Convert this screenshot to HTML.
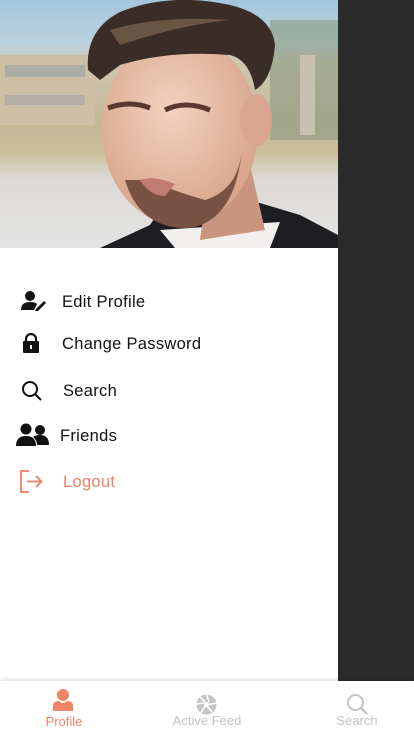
<!DOCTYPE html>
<html><head><meta charset="utf-8"><style>
*{margin:0;padding:0;box-sizing:border-box}
body{width:414px;height:736px;overflow:hidden;background:#fff;font-family:"Liberation Sans",sans-serif;position:relative}
.dark{position:absolute;left:338px;top:0;width:76px;height:681px;background:#2b2b2b}
.photo{position:absolute;left:0;top:0;width:338px;height:248px;overflow:hidden}
.item{position:absolute;left:0;font-size:16.5px;color:#111;letter-spacing:.3px}
.item svg{position:absolute}
.item span{top:2px!important}
.nav{position:absolute;left:0;top:681px;width:414px;height:55px;background:#fff;box-shadow:0 -2px 4px rgba(0,0,0,.12)}
.nav div{position:absolute;font-size:13px;text-align:center}
</style></head><body>
<div class="photo">
<svg width="338" height="248" viewBox="0 0 338 248">
<defs>
<linearGradient id="bg" x1="0" y1="0" x2="0" y2="1">
<stop offset="0" stop-color="#a4c6dc"/><stop offset=".18" stop-color="#bcd2de"/>
<stop offset=".25" stop-color="#cfc6b0"/><stop offset=".5" stop-color="#c4b89a"/>
<stop offset=".62" stop-color="#cbbf9e"/><stop offset=".72" stop-color="#dcdad6"/>
<stop offset="1" stop-color="#e4e4e4"/></linearGradient>
<radialGradient id="sk" cx=".45" cy=".4" r=".6"><stop offset="0" stop-color="#f2d2c0"/><stop offset="1" stop-color="#d8a48c"/></radialGradient>
</defs>
<rect width="338" height="248" fill="url(#bg)"/>
<rect x="0" y="55" width="95" height="70" fill="#cdbfa6"/>
<rect x="5" y="65" width="80" height="12" fill="#8e9ca4" opacity=".5"/>
<rect x="5" y="95" width="80" height="10" fill="#8e9ca4" opacity=".4"/>
<rect x="270" y="20" width="68" height="120" fill="#8a9a80" opacity=".6"/>
<rect x="300" y="55" width="15" height="80" fill="#c8c0b0"/>
<path d="M100 248 L150 225 L160 210 L250 200 L300 215 L338 235 L338 248Z" fill="#1e1e22"/>
<path d="M160 230 L175 248 L270 248 L280 222Z" fill="#f2f0ee"/>
<path d="M210 170 L250 165 L265 230 L200 240Z" fill="#c9957e"/>
<ellipse cx="180" cy="130" rx="78" ry="95" fill="url(#sk)"/>
<ellipse cx="256" cy="120" rx="16" ry="26" fill="#d9a590"/>
<path d="M125 180 Q140 230 190 228 Q235 220 242 150 Q238 190 205 200 Q170 190 150 180Z" fill="#7a5244"/>
<path d="M140 180 Q155 175 175 184 L165 196 Q150 196 140 180Z" fill="#c07c72"/>
<path d="M88 70 Q85 30 120 12 Q170 -8 230 5 Q272 15 275 45 Q272 80 255 90 Q250 60 230 55 Q170 50 120 65 L100 80Z" fill="#3a2c26"/>
<path d="M110 30 Q160 15 230 20 Q180 25 120 45Z" fill="#6a5444"/>
<path d="M108 108 Q130 100 150 108 M165 110 Q185 100 210 110" stroke="#5a3a30" stroke-width="5" fill="none"/>
</svg></div>
<div class="dark"></div>

<div class="item" style="top:291px">
<svg style="left:21px;top:0" width="26" height="20" viewBox="0 0 26 20"><circle cx="9" cy="5" r="5" fill="#111"/><path d="M0 19 Q0 11 9 11 Q14 11 16 13 L13 19Z" fill="#111"/><path d="M15 18 L23 10 L25 12 L17 20 L14 20Z" fill="#111"/></svg>
<span style="position:absolute;left:62px;top:0;white-space:nowrap">Edit Profile</span></div>
<div class="item" style="top:333px">
<svg style="left:22px;top:0" width="18" height="20" viewBox="0 0 18 20"><path d="M4 9 V6 a5 5 0 0 1 10 0 V9" stroke="#111" stroke-width="2.2" fill="none"/><rect x="1" y="8" width="16" height="12" rx="1" fill="#111"/><rect x="8" y="12" width="2" height="4" fill="#fff"/></svg>
<span style="position:absolute;left:62px;top:0;white-space:nowrap">Change Password</span></div>
<div class="item" style="top:380px">
<svg style="left:21px;top:0" width="22" height="22" viewBox="0 0 22 22"><circle cx="9" cy="9" r="7" stroke="#111" stroke-width="2" fill="none"/><path d="M14 14 L20 20" stroke="#111" stroke-width="2"/></svg>
<span style="position:absolute;left:63px;top:0;white-space:nowrap">Search</span></div>
<div class="item" style="top:425px">
<svg style="left:16px;top:-2px" width="34" height="24" viewBox="0 0 34 24"><circle cx="10" cy="6" r="5.5" fill="#111"/><circle cx="24" cy="7" r="5" fill="#111"/><path d="M0 23 Q0 13 10 13 Q20 13 20 23Z" fill="#111"/><path d="M17 14 Q20 12 24 12 Q33 12 33 22 L21 22 Q21 17 17 14Z" fill="#111"/></svg>
<span style="position:absolute;left:60px;top:0;white-space:nowrap">Friends</span></div>
<div class="item" style="top:471px;color:#f07f64">
<svg style="left:20px;top:-1px" width="24" height="24" viewBox="0 0 24 24"><path d="M9 1 H1 V22 H9" stroke="#f07f64" stroke-width="1.8" fill="none"/><path d="M7 11.5 H21 M16 6 L21.5 11.5 L16 17" stroke="#f07f64" stroke-width="1.8" fill="none"/></svg>
<span style="position:absolute;left:63px;top:0;white-space:nowrap">Logout</span></div>

<div class="nav">
<svg style="position:absolute;left:53px;top:8px" width="20" height="22" viewBox="0 0 20 22"><circle cx="10" cy="6" r="6" fill="#f08466"/><path d="M0 22 V17 Q0 12 6 12 Q10 16 14 12 Q20 12 20 17 V22Z" fill="#f08466"/></svg>
<div style="left:34px;top:33px;width:60px;color:#f08466">Profile</div>
<svg style="position:absolute;left:196px;top:13px" width="21" height="21" viewBox="0 0 21 21"><circle cx="10.5" cy="10.5" r="10" fill="#c4c4c4"/><path d="M10.5 .5 L13 8 M20.5 9 L13 10.5 M16 18 L11 12 M5 18.5 L9 12 M0.5 10 L8 9 M4 3 L9 8" stroke="#fff" stroke-width="1.6"/><circle cx="10.5" cy="10.5" r="2.5" fill="#fff"/></svg>
<div style="left:162px;top:32px;width:90px;color:#c4c4c4">Active Feed</div>
<svg style="position:absolute;left:346px;top:12px" width="23" height="23" viewBox="0 0 23 23"><circle cx="9.5" cy="9.5" r="7.5" stroke="#c4c4c4" stroke-width="2" fill="none"/><path d="M15 15 L21 21" stroke="#c4c4c4" stroke-width="2.2"/></svg>
<div style="left:327px;top:32px;width:60px;color:#c4c4c4">Search</div>
</div>
</body></html>
